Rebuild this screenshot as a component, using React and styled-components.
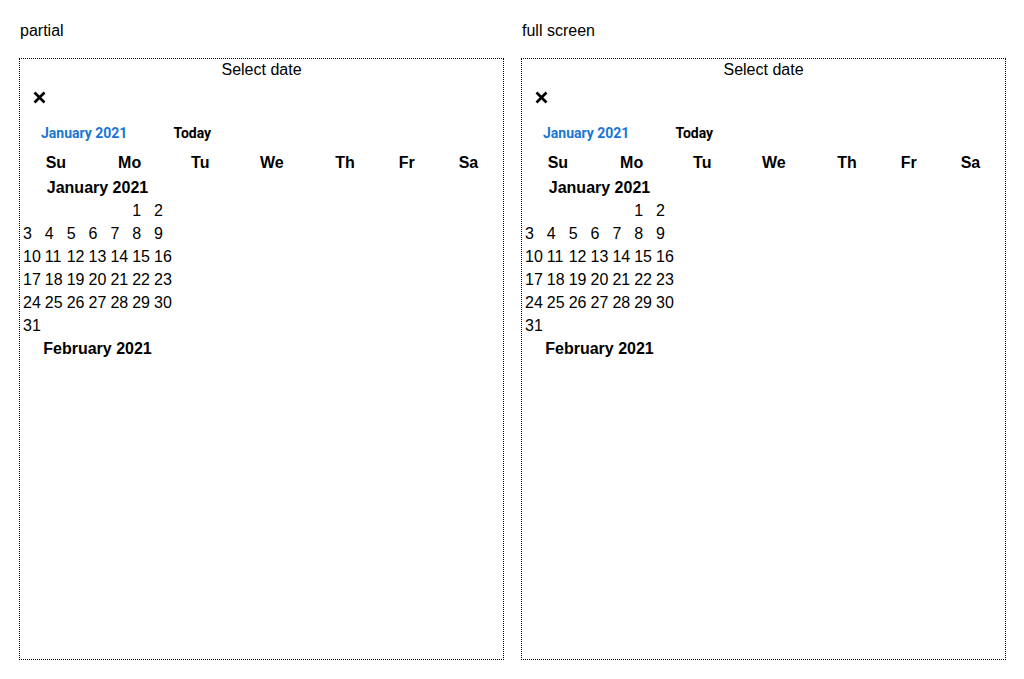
import styled, { createGlobalStyle } from "styled-components";

const GlobalStyle = createGlobalStyle`
  body {
    margin: 0;
    font-family: "Liberation Sans", Arial, sans-serif;
    font-size: 16px;
    color: #000;
    background: #fff;
  }
`;

const weekDays = ["Su", "Mo", "Tu", "We", "Th", "Fr", "Sa"];

// january 2021 starts on a friday
function buildWeeks(firstDay, days) {
  const cells = [];
  for (let i = 0; i < firstDay; i++) cells.push(null);
  for (let d = 1; d <= days; d++) cells.push(d);
  const weeks = [];
  for (let i = 0; i < cells.length; i += 7) weeks.push(cells.slice(i, i + 7));
  return weeks;
}

const months = [
  { name: "January 2021", weeks: buildWeeks(5, 31) },
  { name: "February 2021", weeks: [] },
];

function CloseIcon() {
  return (
    <svg width="13" height="13" viewBox="0 0 13 13">
      <path d="M1.5 1.5 L11.5 11.5 M11.5 1.5 L1.5 11.5" stroke="#000" strokeWidth="2.7" fill="none" />
    </svg>
  );
}

function DatePicker() {
  return (
    <Frame>
      <Title>Select date</Title>
      <CloseButton aria-label="close">
        <CloseIcon />
      </CloseButton>
      <NavBar>
        <NavButton $active>January 2021</NavButton>
        <NavButton>Today</NavButton>
      </NavBar>
      <WeekTable>
        <thead>
          <tr>
            {weekDays.map((d) => (
              <th key={d}>{d}</th>
            ))}
          </tr>
        </thead>
      </WeekTable>
      {months.map((m) => (
        <MonthTable key={m.name}>
          <caption>{m.name}</caption>
          <tbody>
            {m.weeks.map((w, i) => (
              <tr key={i}>
                {w.map((d, j) => (
                  <td key={j}>{d}</td>
                ))}
              </tr>
            ))}
          </tbody>
        </MonthTable>
      ))}
    </Frame>
  );
}

export default function App() {
  return (
    <Page>
      <GlobalStyle />
      <Column>
        <Label>partial</Label>
        <DatePicker />
      </Column>
      <Column>
        <Label>full screen</Label>
        <DatePicker />
      </Column>
    </Page>
  );
}

const Page = styled.div`
  display: grid;
  grid-template-columns: 485px 485px;
  column-gap: 17px;
  padding: 22px 19px 0 19px;
`;

const Column = styled.div`
  display: flex;
  flex-direction: column;
`;

const Label = styled.div`
  height: 18px;
  line-height: 18px;
  padding-left: 1px;
  margin-bottom: 18px;
`;

const Frame = styled.div`
  height: 602px;
  border: 1px dotted #000;
  box-sizing: border-box;
  display: flex;
  flex-direction: column;
  align-items: stretch;
`;

const Title = styled.div`
  text-align: center;
  line-height: 19px;
  padding-top: 1px;
`;

const CloseButton = styled.button`
  align-self: flex-start;
  width: 24px;
  height: 24px;
  margin: 6px 0 0 7px;
  padding: 0;
  border: none;
  background: none;
  display: flex;
  align-items: center;
  justify-content: center;
  cursor: pointer;
`;

const NavBar = styled.div`
  display: flex;
  align-items: center;
  gap: 46px;
  padding-left: 21px;
  margin: 16px 0 9px 0;
  height: 16px;
`;

const NavButton = styled.button`
  padding: 0;
  border: none;
  background: none;
  font-family: Roboto, "Liberation Sans", sans-serif;
  font-weight: 700;
  font-size: 14px;
  line-height: 16px;
  color: ${(p) => (p.$active ? "#1976d2" : "#000")};
  cursor: pointer;
`;

const WeekTable = styled.table`
  width: 100%;
  border-spacing: 2px;
  margin-bottom: 2px;

  th {
    padding: 1px;
    line-height: 19px;
    font-weight: 700;
    text-align: center;
  }
`;

const MonthTable = styled.table`
  width: 155px;
  border-spacing: 2px;
  margin-top: 1px;

  caption {
    font-weight: 700;
    line-height: 19px;
    padding-bottom: 1px;
  }

  td {
    padding: 1px;
    line-height: 19px;
    text-align: left;
  }
`;
